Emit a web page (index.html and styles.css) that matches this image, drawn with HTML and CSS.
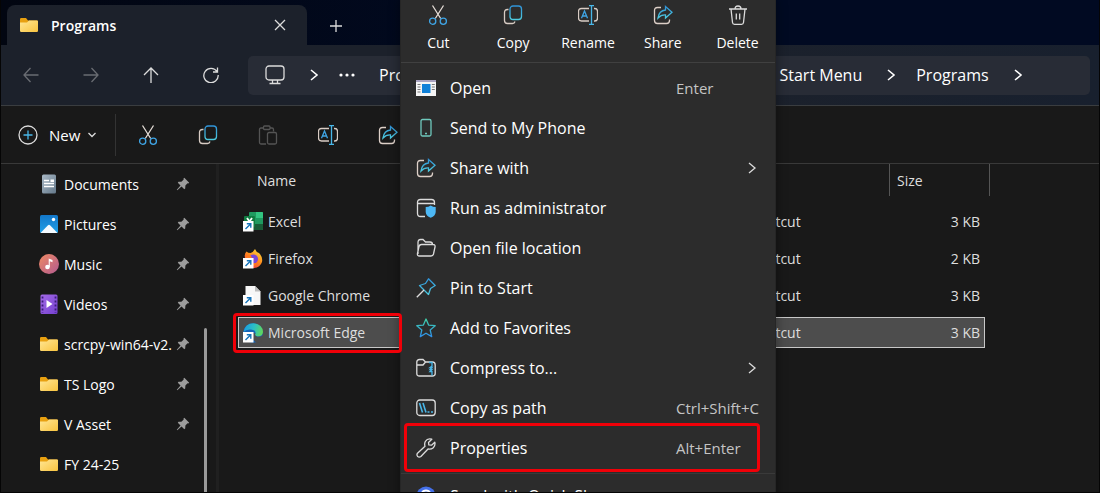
FILE: index.html
```html
<!DOCTYPE html>
<html lang="en">
<head>
    <meta charset="UTF-8">
    <meta name="viewport" content="width=device-width, initial-scale=1.0">
    <title>Programs</title>
    <link rel="stylesheet" href="styles.css">
</head>
<body>
    <svg class="sprite" aria-hidden="true">
        <defs>
            <linearGradient id="gFolder" x1="0" y1="0" x2="1" y2="1"><stop offset="0" stop-color="#ffe694"/><stop offset="1" stop-color="#f9c440"/></linearGradient>
            <linearGradient id="gDoc" x1="0" y1="0" x2="1" y2="1"><stop offset="0" stop-color="#a9b9c6"/><stop offset="1" stop-color="#64788a"/></linearGradient>
            <linearGradient id="gPic" x1="0" y1="0" x2="0" y2="1"><stop offset="0" stop-color="#1377c9"/><stop offset="1" stop-color="#1fa0e8"/></linearGradient>
            <linearGradient id="gMusic" x1="0" y1="0" x2="1" y2="1"><stop offset="0" stop-color="#ef8a63"/><stop offset="1" stop-color="#b25a90"/></linearGradient>
            <linearGradient id="gVideo" x1="0" y1="0" x2="1" y2="1"><stop offset="0" stop-color="#a56be8"/><stop offset="1" stop-color="#7440cf"/></linearGradient>
            <linearGradient id="gStar" x1="0" y1="0" x2="0" y2="1"><stop offset="0" stop-color="#3fd0a8"/><stop offset="1" stop-color="#2f8fe8"/></linearGradient>
            <linearGradient id="gCyan" x1="0" y1="0" x2="0" y2="1"><stop offset="0" stop-color="#2f93d8"/><stop offset="1" stop-color="#4ecbe0"/></linearGradient>
            <linearGradient id="gFox" x1="0.9" y1="0" x2="0.2" y2="1"><stop offset="0" stop-color="#ffe23e"/><stop offset="0.5" stop-color="#ff8a1c"/><stop offset="1" stop-color="#ef2c4f"/></linearGradient>
            <linearGradient id="gEdge" x1="0" y1="0.4" x2="1" y2="0.6"><stop offset="0" stop-color="#1b9de0"/><stop offset="0.5" stop-color="#2cc0c4"/><stop offset="1" stop-color="#62d858"/></linearGradient>
        </defs>
        <symbol id="folder" viewBox="0 0 20 20"><path d="M1 4.200Q1 3 2.200 3H7l2 2.500H17.800Q19 5.500 19 6.700V10H1z" fill="#e8a010"/><path d="M1 7.500H8L10 5.500H18Q19 5.500 19 6.500V15.800Q19 17 17.800 17H2.200Q1 17 1 15.800z" fill="url(#gFolder)"/></symbol>
        <symbol id="doc" viewBox="0 0 20 20"><rect x="3" y="0.500" width="14" height="19" rx="1.500" fill="url(#gDoc)"/><path d="M5 6.500h5M5 9.500h10M5 12.500h10" stroke="#fff" stroke-width="1.300"/><rect x="11.500" y="5.500" width="3.500" height="2.500" fill="#fff"/></symbol>
        <symbol id="pic" viewBox="0 0 20 20"><rect x="1" y="1" width="18" height="18" rx="1.500" fill="url(#gPic)"/><path d="M1.500 19L9 11.200Q10 10.200 11 11.200L18.500 19z" fill="#f4faff"/><circle cx="14.500" cy="5.500" r="1.700" fill="#fff"/></symbol>
        <symbol id="music" viewBox="0 0 20 20"><circle cx="10" cy="10" r="10" fill="url(#gMusic)"/><circle cx="8.500" cy="13" r="2.300" fill="#fff"/><path d="M9.700 13V4.500L13.500 6V8.300L10.800 7.200V13z" fill="#fff"/></symbol>
        <symbol id="video" viewBox="0 0 20 20"><rect x="1.500" y="0.500" width="17" height="19.500" rx="1.500" fill="url(#gVideo)"/><path d="M3.500 2.500V19M16.500 2.500V19" stroke="#3c1d7c" stroke-width="1.800" stroke-dasharray="2 2"/><path d="M7.500 6L13.500 10L7.500 14z" fill="#fff"/></symbol>
        <symbol id="pinned" viewBox="0 0 14 14"><path d="M8.300 0.800L13.200 5.700L12.300 6.500L11.500 6.300L9.400 8.600L9.200 11.500L8.300 12.200L5.500 9.500L1.300 13.200L0.800 12.700L4.500 8.500L1.800 5.700L2.500 4.800L5.400 4.700L7.700 2.500L7.500 1.600z" fill="#9c9c9c"/></symbol>
        <symbol id="cut" viewBox="0 0 20 20"><path d="M4.500 0.500L12.700 13.500M15.500 0.500L7.300 13.500" stroke="#e4dcd6"/><circle cx="4.700" cy="16.200" r="3.100" stroke="#3fa4e4"/><circle cx="15.300" cy="16.200" r="3.100" stroke="#3fa4e4"/></symbol>
        <symbol id="copy" viewBox="0 0 20 20"><path d="M5.500 4.500H4.500Q1.500 4.500 1.500 7.500V15.500Q1.500 18.500 4.500 18.500H9.500Q11.500 18.500 12 16.500" stroke="#d8ccc4"/><rect x="7" y="1" width="11.500" height="13.500" rx="3" stroke="url(#gCyan)"/></symbol>
        <symbol id="paste" viewBox="0 0 20 20"><path d="M6 3H3Q1.500 3 1.500 4.500V17.500Q1.500 19 3 19H8M12 3H14Q15.500 3 15.500 4.500V6.500"/><rect x="5.500" y="1" width="6.500" height="3.500" rx="1"/><rect x="9.500" y="7.500" width="9" height="11.500" rx="1.500"/></symbol>
        <symbol id="rename" viewBox="0 0 20 20"><path d="M11 3.500H3.500Q0.500 3.500 0.500 6.500V13Q0.500 16 3.500 16H11M16 3.500H16.800Q19.500 3.500 19.500 6.500V13Q19.500 16 16.800 16H16" stroke="#d8ccc4"/><path d="M11 0.500H16M13.500 0.500V19.500M11 19.500H16" stroke="#49b7e8"/><path d="M3.500 13.200L6.500 6L9.500 13.200M4.500 11H8.500" stroke="#3fa4e4"/></symbol>
        <symbol id="share" viewBox="0 0 20 20"><path d="M8 2.500H4.500Q1.500 2.500 1.500 5.500V15.500Q1.500 18.500 4.500 18.500H13.500Q16.500 18.500 16.500 15.500V14.500" stroke="#ddd0c8"/><path d="M12.500 1.500L19 7.200L12.500 13V9.800Q8 9.500 5 13Q6 5.500 12.500 5z" stroke="url(#gCyan)"/></symbol>
        <symbol id="trash" viewBox="0 0 20 20"><path d="M1 4H19M7 4Q7 1 10 1T13 4M3 4L4.500 17.500Q4.700 19.300 6.500 19.300H13.500Q15.300 19.300 15.500 17.500L17 4M8.300 8.500V14.500M11.700 8.500V14.500"/></symbol>
        <symbol id="app" viewBox="0 0 20 20"><rect x="0" y="2" width="20" height="16" fill="#f5f5f5"/><path d="M0 3H20" stroke="#a9a3c0" stroke-width="2"/><rect x="6" y="6" width="8.500" height="9" fill="#0f80d8"/><path d="M1.500 6.500h3M1.500 9h3M1.500 11.500h3M1.500 14h3M15.800 6.500h3M15.800 9h3M15.800 11.500h3" stroke="#777" stroke-width="1"/></symbol>
        <symbol id="phone" viewBox="0 0 20 20"><rect x="5" y="1.500" width="10" height="16.500" rx="1.500" stroke="#6fc9bd"/><path d="M9 15.500H11" stroke="#6fc9bd"/></symbol>
        <symbol id="admin" viewBox="0 0 20 20"><path d="M9 18.500H4.500Q1.500 18.500 1.500 15.500V4.500Q1.500 1.500 4.500 1.500H15.500Q18.500 1.500 18.500 4.500V7M1.500 5.500H18.500"/><path d="M14.700 7.500Q17 9 19.700 9V14Q19.500 18 14.700 19.700Q9.900 18 9.700 14V9Q12.500 9 14.700 7.500z" fill="#4db8f5" stroke="none"/></symbol>
        <symbol id="open" viewBox="0 0 20 20"><path d="M2 16V4.500Q2 1.500 4.500 1.500H7L9.500 4H14Q16.500 4 16.500 6.500M5.500 6.500H17Q19.500 6.500 19 9L17.500 16Q17 18 15 18H3.500Q1 18 1.500 15.500L3 8.500Q3.500 6.500 5.500 6.500z"/></symbol>
        <symbol id="pin" viewBox="0 0 20 20"><path d="M12.500 0.800L19.200 7.500L14.500 10.500L12.500 16.500L3.500 7.500L9.500 5.500z" stroke="url(#gCyan)" stroke-linejoin="round"/><path d="M8 12L0.800 19.200" stroke="#ddd"/></symbol>
        <symbol id="star" viewBox="0 0 20 20"><path d="M10 1L12.600 7.100L19.200 7.700L14.200 12L15.700 18.600L10 15.200L4.300 18.600L5.800 12L0.800 7.700L7.400 7.100z" stroke="url(#gStar)" stroke-linejoin="round"/></symbol>
        <symbol id="zip" viewBox="0 0 20 20"><path d="M0.800 7H7L9.500 4H16.500Q19.200 4 19.200 7V15.500Q19.200 18 16.500 18H3.500Q0.800 18 0.800 15.500V4Q0.800 1.500 3.500 1.500H7L9.500 4"/><path d="M13 4.500H16V8L14 9.500H16L14 11.500H16L14 13.500H16V17.500" stroke="#49b7e8"/></symbol>
        <symbol id="path" viewBox="0 0 20 20"><rect x="0.800" y="2" width="18.400" height="15.500" rx="3"/><path d="M3.500 5L6.500 14.500M7 5L10 14.500M11.500 14H13.500M15 14H17" stroke="#49b7e8" stroke-width="1.600"/></symbol>
        <symbol id="wrench" viewBox="0 0 20 20"><path d="M15.800 1.200Q11.500 0 9.300 3.500Q8.200 5.700 9 8.200L1.500 15.200Q0.300 17 1.700 18.500Q3.200 19.700 4.900 18.500L12 11Q15 11.700 17.300 9.700Q19.600 7.300 18.800 4.200L15.500 7.200L12.800 6.900L12.500 4.500z" stroke-linejoin="round"/></symbol>
        <symbol id="quick" viewBox="0 0 20 20"><circle cx="10" cy="10" r="9.500" fill="#4470ea" stroke="none"/><path d="M6 8Q6 4.500 10 4.500T14 8M7 12Q10 15 13 12" stroke="#fff" stroke-width="2"/></symbol>
        <symbol id="chev" viewBox="0 0 10 12"><path d="M2 1L8 6L2 11"/></symbol>
        <symbol id="shortcut" viewBox="0 0 20 20"><rect x="0" y="9" width="10.500" height="10.500" fill="#fff"/><path d="M2.500 17L7.300 12.200M3.800 11.800H7.800V15.800" stroke="#1673b9" stroke-width="1.400" fill="none"/></symbol>
    </svg>

    <div class="window">
        <header class="titlebar">
            <div class="tab">
                <svg class="icon"><use href="#folder"/></svg>
                <span class="tab-name">Programs</span>
                <button class="tab-button" aria-label="Close tab"><svg class="line small" viewBox="0 0 12 12"><path d="M1 1L11 11M11 1L1 11"/></svg></button>
            </div>
            <button class="tab-button new-tab" aria-label="New tab"><svg class="line small" viewBox="0 0 12 12"><path d="M6 0V12M0 6H12"/></svg></button>
        </header>

        <nav class="navbar">
            <button class="nav-button" aria-label="Back" disabled><svg class="line nav-icon" viewBox="0 0 16 16"><path d="M15.500 8H1M7.500 1L1 8L7.500 15"/></svg></button>
            <button class="nav-button" aria-label="Forward" disabled><svg class="line nav-icon" viewBox="0 0 16 16"><path d="M0.500 8H15M8.500 1L15 8L8.500 15"/></svg></button>
            <button class="nav-button" aria-label="Up"><svg class="line nav-icon" viewBox="0 0 16 16"><path d="M8 16V1M1 8L8 1L15 8"/></svg></button>
            <button class="nav-button" aria-label="Refresh"><svg class="line nav-icon" viewBox="0 0 16 16"><path d="M14 4.500A7.200 7.200 0 1 0 15.200 8M14.500 0.500V5H10"/></svg></button>
            <div class="address">
                <svg class="line icon" viewBox="0 0 20 20"><rect x="1" y="1" width="18" height="14" rx="3"/><path d="M7.500 15V18.500M12.500 15V18.500M4.500 18.500H15.500"/></svg>
                <svg class="line chevron crumb-sep"><use href="#chev"/></svg>
                <button class="crumb dots" aria-label="More folders"><svg viewBox="0 0 16 4"><circle cx="2" cy="2" r="1.600"/><circle cx="8" cy="2" r="1.600"/><circle cx="14" cy="2" r="1.600"/></svg></button>
                <button class="crumb">ProgramData</button>
                <svg class="line chevron crumb-sep"><use href="#chev"/></svg>
                <button class="crumb">Microsoft</button>
                <svg class="line chevron crumb-sep"><use href="#chev"/></svg>
                <button class="crumb">Windows</button>
                <svg class="line chevron crumb-sep"><use href="#chev"/></svg>
                <button class="crumb">Start Menu</button>
                <svg class="line chevron crumb-sep"><use href="#chev"/></svg>
                <button class="crumb">Programs</button>
                <svg class="line chevron crumb-sep"><use href="#chev"/></svg>
            </div>
        </nav>

        <div class="toolbar">
            <button class="new-button">
                <svg class="line icon" viewBox="0 0 20 20"><circle cx="10" cy="10" r="9"/><path d="M10 5.500V14.500M5.500 10H14.500" stroke="#49b7e8"/></svg>
                New
                <svg class="line caret" viewBox="0 0 8 8"><path d="M0.500 2L4 5.500L7.500 2"/></svg>
            </button>
            <button class="tool" aria-label="Cut"><svg class="line icon"><use href="#cut"/></svg></button>
            <button class="tool" aria-label="Copy"><svg class="line icon"><use href="#copy"/></svg></button>
            <button class="tool" aria-label="Paste" disabled><svg class="line icon"><use href="#paste"/></svg></button>
            <button class="tool" aria-label="Rename"><svg class="line icon"><use href="#rename"/></svg></button>
            <button class="tool" aria-label="Share"><svg class="line icon"><use href="#share"/></svg></button>
        </div>

        <div class="content">
            <aside class="sidebar">
                <a class="place" href="#"><svg class="icon"><use href="#doc"/></svg><span class="place-name">Documents</span><svg class="pinned"><use href="#pinned"/></svg></a>
                <a class="place" href="#"><svg class="icon"><use href="#pic"/></svg><span class="place-name">Pictures</span><svg class="pinned"><use href="#pinned"/></svg></a>
                <a class="place" href="#"><svg class="icon"><use href="#music"/></svg><span class="place-name">Music</span><svg class="pinned"><use href="#pinned"/></svg></a>
                <a class="place" href="#"><svg class="icon"><use href="#video"/></svg><span class="place-name">Videos</span><svg class="pinned"><use href="#pinned"/></svg></a>
                <a class="place" href="#"><svg class="icon"><use href="#folder"/></svg><span class="place-name">scrcpy-win64-v2.</span><svg class="pinned"><use href="#pinned"/></svg></a>
                <a class="place" href="#"><svg class="icon"><use href="#folder"/></svg><span class="place-name">TS Logo</span><svg class="pinned"><use href="#pinned"/></svg></a>
                <a class="place" href="#"><svg class="icon"><use href="#folder"/></svg><span class="place-name">V Asset</span><svg class="pinned"><use href="#pinned"/></svg></a>
                <a class="place" href="#"><svg class="icon"><use href="#folder"/></svg><span class="place-name">FY 24-25</span></a>
                <div class="scroll-thumb"></div>
            </aside>

            <main class="files">
                <table class="file-table">
                    <thead>
                        <tr><th class="col-name"><span>Name</span></th><th class="col-type"><span>Type</span></th><th class="col-size"><span>Size</span></th></tr>
                    </thead>
                    <tbody>
                        <tr>
                            <td><div class="file"><svg class="icon" viewBox="0 0 20 20"><rect x="6" y="0" width="14" height="18" rx="1" fill="#1f9a60"/><path d="M13 0H19Q20 0 20 1V6H13z" fill="#33c481"/><path d="M6 12H20V17Q20 18 19 18H6z" fill="#185c37"/><rect x="1" y="4" width="11" height="11" rx="1" fill="#107c41"/><path d="M4 6L9 13M9 6L4 13" stroke="#fff" stroke-width="1.800"/><use href="#shortcut"/></svg>Excel</div></td>
                            <td>Shortcut</td><td class="size">3 KB</td>
                        </tr>
                        <tr>
                            <td><div class="file"><svg class="icon" viewBox="0 0 20 20"><path d="M2 9Q1 5 3.500 2.500Q5 4 7.500 4Q10 3.500 12 0Q13 3 16 4Q20 8 19 13Q17 19 10 19Q3 18 2 9z" fill="url(#gFox)"/><circle cx="10.500" cy="10" r="4.500" fill="#7a46d8"/><path d="M3 7Q8 5 9 9Q11 9 11 10.500Q8 11 8 13Q10 16 15 13Q12 19 6 16z" fill="#ff7a1f"/><use href="#shortcut"/></svg>Firefox</div></td>
                            <td>Shortcut</td><td class="size">2 KB</td>
                        </tr>
                        <tr>
                            <td><div class="file"><svg class="icon" viewBox="0 0 20 20"><path d="M2.500 0H12L17.500 5.500V19H2.500z" fill="#f7f7f7"/><path d="M12 0V5.500H17.500z" fill="#bdbdbd"/><use href="#shortcut"/></svg>Google Chrome</div></td>
                            <td>Shortcut</td><td class="size">3 KB</td>
                        </tr>
                        <tr class="selected">
                            <td><div class="file marked"><svg class="icon" viewBox="0 0 20 20"><circle cx="10" cy="10" r="9.800" fill="#1565b8"/><path d="M0.500 9Q2 0.200 10.500 0.200Q19.500 1 20 9Q19.500 13.500 14.500 13.500Q11 13 12.500 10.500Q13 7 8 6.500Q3 6 0.500 9z" fill="url(#gEdge)"/><path d="M12.500 10.500Q11 13 14.500 13.800Q18 14 19.500 12.500Q20 20 14 20Q9 17 9 12Q9 9 12.500 10.500z" fill="#4d4d4d"/><use href="#shortcut"/></svg>Microsoft Edge</div></td>
                            <td>Shortcut</td><td class="size">3 KB</td>
                        </tr>
                    </tbody>
                </table>
            </main>
        </div>

        <div class="menu" role="menu">
            <div class="menu-actions">
                <button class="action"><svg class="line icon"><use href="#cut"/></svg>Cut</button>
                <button class="action"><svg class="line icon"><use href="#copy"/></svg>Copy</button>
                <button class="action"><svg class="line icon"><use href="#rename"/></svg>Rename</button>
                <button class="action"><svg class="line icon"><use href="#share"/></svg>Share</button>
                <button class="action"><svg class="line icon"><use href="#trash"/></svg>Delete</button>
            </div>
            <div class="menu-group">
                <button class="menu-item"><svg class="icon"><use href="#app"/></svg><span>Open</span><kbd>Enter</kbd></button>
                <button class="menu-item"><svg class="line icon"><use href="#phone"/></svg><span>Send to My Phone</span></button>
                <button class="menu-item"><svg class="line icon"><use href="#share"/></svg><span>Share with</span><svg class="line chevron"><use href="#chev"/></svg></button>
                <button class="menu-item"><svg class="line icon"><use href="#admin"/></svg><span>Run as administrator</span></button>
                <button class="menu-item"><svg class="line icon"><use href="#open"/></svg><span>Open file location</span></button>
                <button class="menu-item"><svg class="line icon"><use href="#pin"/></svg><span>Pin to Start</span></button>
                <button class="menu-item"><svg class="line icon"><use href="#star"/></svg><span>Add to Favorites</span></button>
                <button class="menu-item"><svg class="line icon"><use href="#zip"/></svg><span>Compress to...</span><svg class="line chevron"><use href="#chev"/></svg></button>
                <button class="menu-item"><svg class="line icon"><use href="#path"/></svg><span>Copy as path</span><kbd>Ctrl+Shift+C</kbd></button>
                <button class="menu-item marked"><svg class="line icon"><use href="#wrench"/></svg><span>Properties</span><kbd>Alt+Enter</kbd></button>
            </div>
            <div class="menu-group">
                <button class="menu-item"><svg class="line icon"><use href="#quick"/></svg><span>Send with Quick Share</span></button>
            </div>
        </div>
    </div>
</body>
</html>
```
FILE: styles.css
```css
* { box-sizing: border-box; }
body { margin: 0; background: #000; color: #fff; font-family: "Open Sans", "Noto Sans", sans-serif; font-size: 14px; }
button { margin: 0; padding: 0; border: none; background: none; color: inherit; font: inherit; cursor: pointer; }
a { color: inherit; text-decoration: none; }
.sprite { position: absolute; width: 0; height: 0; }

.window { position: relative; display: flex; flex-direction: column; height: 100vh; overflow: hidden; background: #191919; border: solid #050505; border-width: 0 1px 1px; }

/* icons */
svg { display: block; flex: none; }
.icon { width: 20px; height: 20px; }
.small { width: 12px; height: 12px; }
.nav-icon { width: 16px; height: 16px; }
.chevron { width: 10px; height: 12px; }
.caret { width: 8px; height: 8px; }
.pinned { width: 14px; height: 14px; }
.line { fill: none; stroke: #dcdcdc; stroke-width: 1.3; }

/* tabs */
.titlebar { display: flex; align-items: flex-end; height: 45px; flex: none; padding-left: 6px; background: linear-gradient(90deg, #020611, #010a22 50%); }
.tab { display: flex; align-items: center; gap: 12px; width: 300px; height: 40px; padding: 0 12px; border-radius: 8px 8px 0 0; background: #1c212b; }
.tab-name { flex: 1; font-weight: 600; }
.tab-button { display: grid; place-items: center; width: 30px; height: 30px; }
.new-tab { margin: 0 0 4px 14px; }

/* navigation */
.navbar { display: flex; align-items: center; flex: none; height: 61px; padding-right: 9px; background: linear-gradient(90deg, #1c212b 60%, #18202e); border-bottom: 1px solid #3a3d40; }
.nav-button { display: grid; place-items: center; width: 60px; height: 40px; }
.nav-button:disabled { opacity: 0.4; }
.address { display: flex; align-items: center; flex: 1; height: 39px; margin-left: 7px; padding-left: 17px; border-radius: 5px; background: #282c36; overflow: hidden; }
.crumb { font-size: 16px; white-space: nowrap; }
.crumb-sep { margin: 0 20px 0 24px; stroke: #fff; stroke-width: 1.6; }
.dots { width: 16px; margin-right: 24px; }
.dots svg { fill: #fff; }

/* commands */
.toolbar { display: flex; align-items: center; flex: none; height: 58px; padding-left: 17px; border-bottom: 1px solid #393939; }
.new-button { display: flex; align-items: center; gap: 8px; width: 98px; height: 42px; margin-right: 2px; border-right: 1px solid #333; font-size: 15px; }
.new-button .icon { margin-right: 3px; }
.tool { display: grid; place-items: center; width: 60px; height: 40px; }
.tool:disabled { opacity: 0.3; }

/* places */
.content { display: flex; flex: 1; min-height: 0; }
.sidebar { position: relative; width: 218px; flex: none; padding-left: 38px; border-right: 3px solid #202020; overflow: hidden; }
.place { display: flex; align-items: center; gap: 5px; height: 40px; }
.place-name { width: 107px; white-space: nowrap; }
.scroll-thumb { position: absolute; right: 9px; top: 164px; bottom: 0; width: 3px; border-radius: 2px 2px 0 0; background: #9a9a9a; }

/* file list */
.files { flex: 1; padding: 0 114px 0 19px; }
.file-table { width: 100%; margin-top: -6px; border-collapse: separate; border-spacing: 0 6px; table-layout: fixed; color: #dedede; }
.file-table th { height: 36px; padding: 0; font-weight: 400; text-align: left; vertical-align: top; }
.file-table th span { display: block; height: 32px; padding-left: 7px; line-height: 34px; }
.file-table .col-name span { padding-left: 19px; }
.col-type { width: 151px; }
.col-size { width: 96px; }
.col-size span { margin-right: -5px; border: solid #555; border-width: 0 1px; }
.file-table td { height: 31px; padding: 0 7px; border: solid transparent; border-width: 1px 0; }
.file-table td:first-child { padding-left: 4px; border-left-width: 1px; }
.file-table td:last-child { padding-right: 4px; border-right-width: 1px; }
.file-table .size { text-align: right; }
.selected td { background: #4d4d4d; border-color: #c8c8c8; }
.file { position: relative; display: flex; align-items: center; gap: 5px; height: 29px; }

/* context menu */
.menu { position: absolute; z-index: 1; left: 399px; top: -8px; width: 376px; padding-top: 8px; border: 1px solid #262626; border-radius: 8px; background: #2c2c2c; box-shadow: 0 4px 12px rgba(0, 0, 0, 0.4); }
.menu-actions { display: grid; grid-template-columns: repeat(5, 1fr); height: 62px; border-bottom: 1px solid #404040; }
.action { display: flex; flex-direction: column; align-items: center; gap: 8px; padding-top: 4px; line-height: 20px; }
.menu-group { padding: 5px 15px; }
.menu-group + .menu-group { padding-top: 2px; border-top: 1px solid #3a3a3a; }
.menu-item { position: relative; display: flex; align-items: center; gap: 14px; width: 100%; height: 40px; font-size: 16px; text-align: left; }
.menu-item span { flex: 1; white-space: nowrap; }
.menu-item .chevron { margin-right: 3px; }
.menu-item kbd { width: 84px; color: #c4c4c4; font: inherit; font-size: 15px; white-space: nowrap; }

/* red call-out frames */
.marked::after { content: ""; position: absolute; z-index: 2; box-sizing: border-box; border: 3px solid #f00008; border-radius: 4px; pointer-events: none; }
.file.marked::after { left: -10px; top: -5px; width: 169px; height: 40px; }
.menu-item.marked::after { inset: -5px 0 -4px -12px; }
```
